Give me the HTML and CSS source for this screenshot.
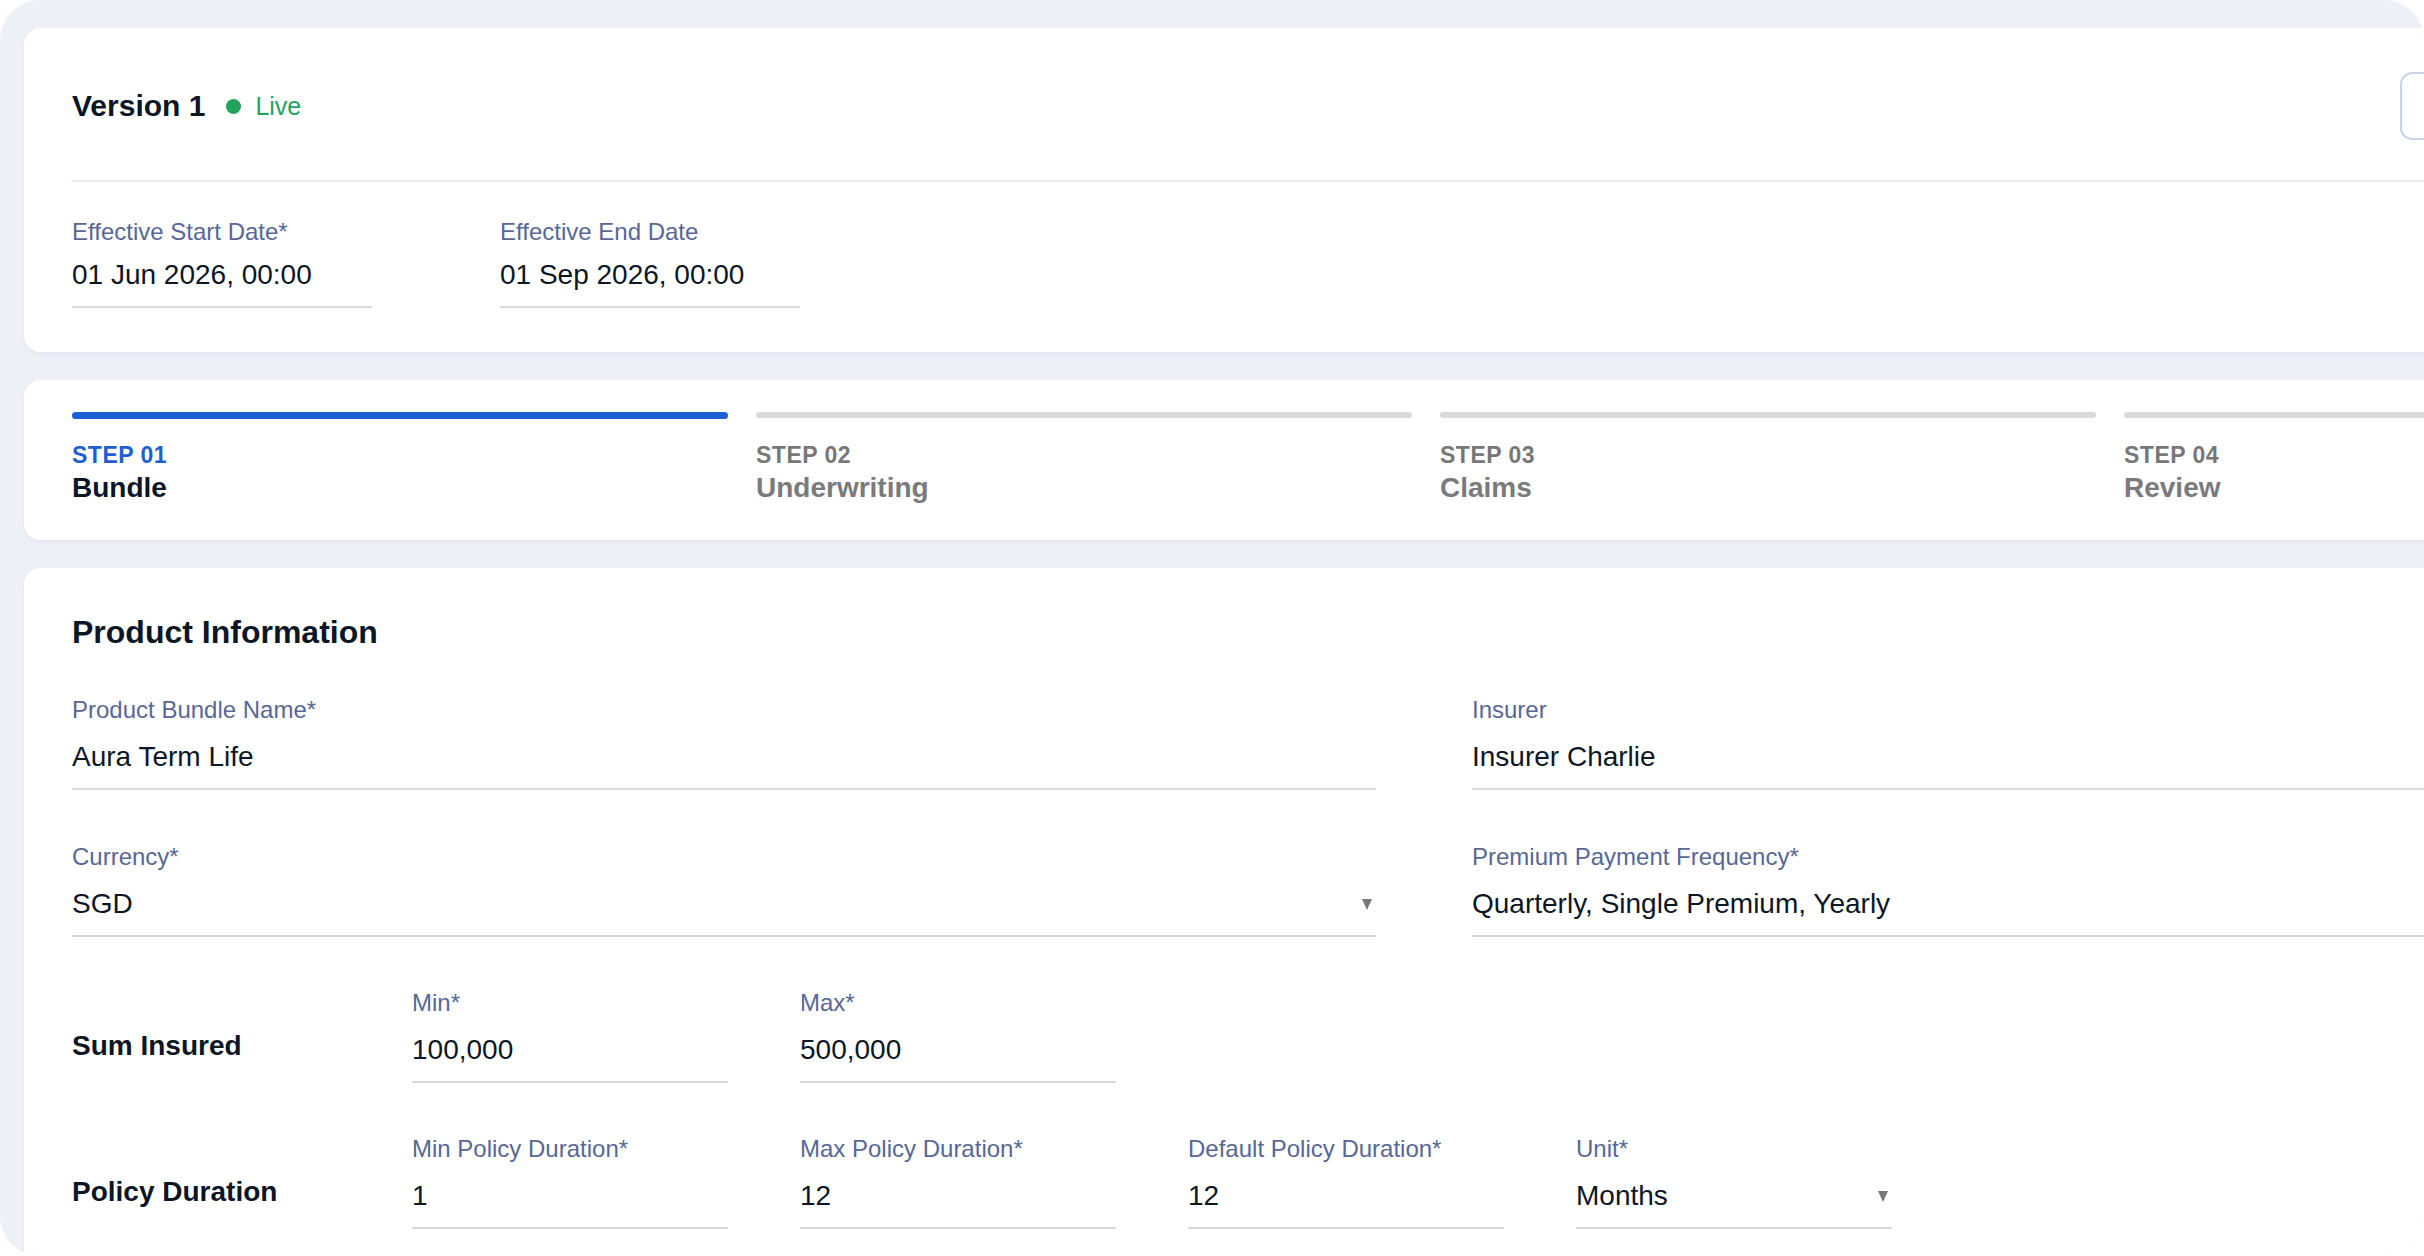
FILE: index.html
```html
<!DOCTYPE html>
<html lang="en">
<head>
<meta charset="utf-8">
<title>Product Bundle – Version 1</title>
<link rel="stylesheet" href="styles.css">
</head>
<body>
<div class="frame">
  <div class="stack">
    <section class="card card-version">
      <div class="version-head">
        <div class="version-title">
          <h1 class="version-name">Version 1</h1>
          <span class="status"><span class="status-dot"></span>Live</span>
        </div>
        <div class="actions">
          <button class="btn btn-outline" type="button" aria-label="Edit version">
            <svg class="btn-icon" viewBox="0 0 24 24" width="24" height="24"><path d="M4 20h4L19 9l-4-4L4 16v4z" fill="none" stroke="#1b5fd3" stroke-width="2" stroke-linejoin="round"/></svg>
          </button>
          <button class="btn btn-primary" type="button" aria-label="Save version">
            <svg class="btn-icon" viewBox="0 0 24 24" width="24" height="24"><path d="M5 12l5 5 9-10" fill="none" stroke="#ffffff" stroke-width="2.4" stroke-linecap="round" stroke-linejoin="round"/></svg>
          </button>
        </div>
      </div>
      <div class="divider"></div>
      <div class="date-row">
        <div class="field field-compact field-date">
          <div class="field-label">Effective Start Date*</div>
          <div class="field-value">01 Jun 2026, 00:00</div>
        </div>
        <div class="field field-compact field-date">
          <div class="field-label">Effective End Date</div>
          <div class="field-value">01 Sep 2026, 00:00</div>
        </div>
      </div>
    </section>

    <section class="card card-steps">
      <ol class="steps">
        <li class="step is-active">
          <div class="step-track"><span class="step-bar"></span></div>
          <span class="step-num">STEP 01</span>
          <span class="step-name">Bundle</span>
        </li>
        <li class="step">
          <div class="step-track"><span class="step-bar"></span></div>
          <span class="step-num">STEP 02</span>
          <span class="step-name">Underwriting</span>
        </li>
        <li class="step">
          <div class="step-track"><span class="step-bar"></span></div>
          <span class="step-num">STEP 03</span>
          <span class="step-name">Claims</span>
        </li>
        <li class="step">
          <div class="step-track"><span class="step-bar"></span></div>
          <span class="step-num">STEP 04</span>
          <span class="step-name">Review</span>
        </li>
      </ol>
    </section>

    <section class="card card-form">
      <h2 class="section-title">Product Information</h2>
      <div class="form-grid">
        <div class="field">
          <div class="field-label">Product Bundle Name*</div>
          <div class="field-value">Aura Term Life</div>
        </div>
        <div class="field">
          <div class="field-label">Insurer</div>
          <div class="field-value">Insurer Charlie</div>
        </div>
        <div class="field">
          <div class="field-label">Currency*</div>
          <div class="field-value field-select"><span>SGD</span><span class="caret"></span></div>
        </div>
        <div class="field">
          <div class="field-label">Premium Payment Frequency*</div>
          <div class="field-value">Quarterly, Single Premium, Yearly</div>
        </div>
      </div>

      <div class="range-row">
        <div class="range-label">Sum Insured</div>
        <div class="field">
          <div class="field-label">Min*</div>
          <div class="field-value">100,000</div>
        </div>
        <div class="field">
          <div class="field-label">Max*</div>
          <div class="field-value">500,000</div>
        </div>
      </div>

      <div class="range-row">
        <div class="range-label">Policy Duration</div>
        <div class="field">
          <div class="field-label">Min Policy Duration*</div>
          <div class="field-value">1</div>
        </div>
        <div class="field">
          <div class="field-label">Max Policy Duration*</div>
          <div class="field-value">12</div>
        </div>
        <div class="field">
          <div class="field-label">Default Policy Duration*</div>
          <div class="field-value">12</div>
        </div>
        <div class="field">
          <div class="field-label">Unit*</div>
          <div class="field-value field-select"><span>Months</span><span class="caret"></span></div>
        </div>
      </div>
    </section>
  </div>
</div>
</body>
</html>
```
FILE: styles.css
```css
* { box-sizing: border-box; }

html, body {
  margin: 0;
  padding: 0;
  background: #ffffff;
  overflow: hidden;
}

body {
  font-family: "Liberation Sans", Arial, sans-serif;
  color: #0d1624;
}

.frame {
  width: 2424px;
  height: 1256px;
  background: #edf0f7;
  border-radius: 40px;
  overflow: hidden;
  padding: 28px 0 0 24px;
}

.stack {
  display: flex;
  flex-direction: column;
  gap: 28px;
  width: 2804px;
}

.card {
  background: #ffffff;
  border-radius: 16px;
  padding: 0 48px;
  box-shadow: 0 2px 4px rgba(30, 45, 90, 0.06);
}

/* ---------- Version card ---------- */
.card-version {
  padding-top: 44px;
  padding-bottom: 44px;
}

.version-head {
  display: flex;
  align-items: center;
  justify-content: space-between;
  height: 68px;
}

.version-title {
  display: flex;
  align-items: center;
  gap: 21px;
}

.version-name {
  margin: 0;
  font-size: 30px;
  line-height: 34px;
  font-weight: 700;
  color: #0d1624;
}

.status {
  display: flex;
  align-items: center;
  gap: 14px;
  font-size: 25px;
  line-height: 28px;
  color: #22a45d;
}

.status-dot {
  width: 15px;
  height: 15px;
  border-radius: 50%;
  background: #22a45d;
}

.actions {
  display: flex;
  gap: 16px;
  width: 380px;
}

.btn {
  height: 68px;
  width: 182px;
  border-radius: 12px;
  display: flex;
  align-items: center;
  justify-content: center;
  padding: 0;
}

.btn-outline {
  background: #ffffff;
  border: 2px solid #c8d3ea;
}

.btn-primary {
  background: #1b5fd3;
  border: 2px solid #1b5fd3;
}

.divider {
  height: 2px;
  background: #e9ecf2;
  margin-top: 40px;
}

.date-row {
  display: flex;
  gap: 128px;
  margin-top: 36px;
}

.field-date {
  width: 300px;
}

/* ---------- Fields ---------- */
.field {
  display: flex;
  flex-direction: column;
  border-bottom: 2px solid #d8d8d8;
  padding-bottom: 15px;
}

.field-label {
  font-size: 24px;
  line-height: 28px;
  color: #586795;
}

.field-value {
  margin-top: 17px;
  font-size: 28px;
  line-height: 32px;
  color: #0d1624;
  white-space: nowrap;
}

.field-compact .field-value {
  margin-top: 13px;
}

.field-select {
  display: flex;
  align-items: center;
  justify-content: space-between;
  padding-right: 4px;
}

.caret {
  width: 0;
  height: 0;
  border-left: 5px solid transparent;
  border-right: 5px solid transparent;
  border-top: 11px solid #777777;
}

/* ---------- Steps ---------- */
.card-steps {
  padding-top: 32px;
  padding-bottom: 36px;
}

.steps {
  list-style: none;
  margin: 0;
  padding: 0;
  display: grid;
  grid-template-columns: repeat(4, 656px);
  column-gap: 28px;
}

.step {
  display: flex;
  flex-direction: column;
}

.step-track {
  height: 7px;
}

.step-bar {
  display: block;
  height: 6px;
  border-radius: 3px;
  background: #dadada;
}

.step.is-active .step-bar {
  height: 7px;
  border-radius: 4px;
  background: #1b5fd3;
}

.step-num {
  margin-top: 22px;
  font-size: 23px;
  line-height: 28px;
  font-weight: 700;
  letter-spacing: 0.5px;
  color: #777777;
}

.step-name {
  margin-top: 3px;
  font-size: 28px;
  line-height: 32px;
  font-weight: 700;
  color: #7a7a7a;
}

.step.is-active .step-num {
  color: #1d5fd3;
}

.step.is-active .step-name {
  color: #0d1624;
}

/* ---------- Product form ---------- */
.card-form {
  padding-top: 46px;
  padding-bottom: 60px;
}

.section-title {
  margin: 0;
  font-size: 32px;
  line-height: 36px;
  font-weight: 700;
  color: #0d1624;
}

.form-grid {
  display: grid;
  grid-template-columns: 1304px 1fr;
  column-gap: 96px;
  row-gap: 53px;
  margin-top: 46px;
}

.range-row {
  display: grid;
  grid-template-columns: 268px repeat(4, 316px);
  column-gap: 72px;
  margin-top: 52px;
  align-items: start;
}

.range-label {
  padding-top: 41px;
  font-size: 28px;
  line-height: 32px;
  font-weight: 700;
  color: #0d1624;
}
```
